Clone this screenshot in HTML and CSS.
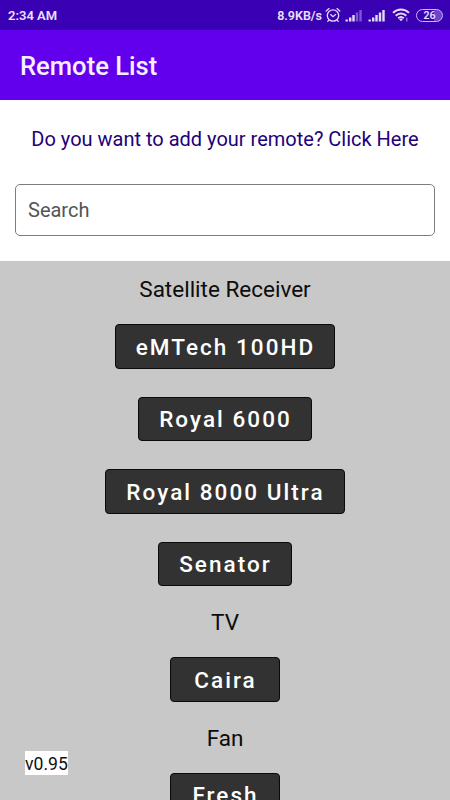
FILE: index.html
```html
<!DOCTYPE html>
<html lang="en">
<head>
  <meta charset="UTF-8">
  <title>Remote List</title>
  <link rel="stylesheet" href="styles.css">
</head>
<body>

  <!-- STATUS BAR -->
  <div class="status-bar">
    <span class="clock">2:34 AM</span>
    <div class="status-icons">
      <span class="speed">8.9KB/s</span>
      <svg class="alarm" width="16" height="16" viewBox="0 0 16 16" fill="none" stroke="#e4d9fb" stroke-width="1.3" stroke-linecap="round">
        <circle cx="8" cy="8.5" r="5.7"/>
        <path d="M1.2 4L4 1.6M14.8 4L12 1.6M5.6 7.6L8 9.7L10.6 7.6M3.8 13.2L2.8 14.4M12.2 13.2L13.2 14.4"/>
      </svg>
      <svg class="signal" width="18" height="13" viewBox="0 0 18 13" fill="#e4d9fb">
        <path d="M0.5 10.5h2.4v2h-2.4zM4 8.5h2.4v4h-2.4zM7.3 6h2.4v6.5h-2.4z"/>
        <path opacity=".4" d="M10.8 3.5h2.4v9h-2.4zM14.3 1h2.4v11.5h-2.4z"/>
      </svg>
      <svg class="signal-full" width="18" height="13" viewBox="0 0 18 13" fill="#e4d9fb">
        <path d="M0.5 10.5h2.4v2h-2.4zM4 8.5h2.4v4h-2.4zM7.3 6h2.4v6.5h-2.4zM10.8 3.5h2.4v9h-2.4zM14.3 1h2.4v11.5h-2.4z"/>
      </svg>
      <svg class="wifi" width="18" height="14" viewBox="0 0 18 14" fill="none" stroke="#e4d9fb" stroke-width="1.9">
        <path d="M1 4.9C5.6 0.4 12.4 0.4 17 4.9M3.7 7.7C6.8 4.7 11.2 4.7 14.3 7.7M6.2 10.2C7.8 8.7 10.2 8.7 11.8 10.2"/>
        <path fill="#e4d9fb" stroke="none" d="M7.1 11.3Q9 9.8 10.9 11.3L9 13.3z"/>
        <path stroke-width="1.2" opacity=".6" d="M14.8 9.8v3.6"/>
      </svg>
      <span class="battery">26</span>
    </div>
  </div>

  <!-- TITLE BAR -->
  <div class="app-bar">
    <h1>Remote List</h1>
  </div>

  <div class="top-section">
    <a class="add-remote" href="#">Do you want to add your remote? Click Here</a>
    <input type="text" class="search" placeholder="Search">
  </div>

  <!-- REMOTES -->
  <div class="remote-list">
    <h2>Satellite Receiver</h2>
    <button>eMTech 100HD</button>
    <button>Royal 6000</button>
    <button>Royal 8000 Ultra</button>
    <button>Senator</button>
    <h2>TV</h2>
    <button>Caira</button>
    <h2>Fan</h2>
    <button>Fresh</button>
  </div>

  <span class="version">v0.95</span>

</body>
</html>
```
FILE: styles.css
```css
* {
  box-sizing: border-box;
}

body {
  display: flex;
  flex-direction: column;
  height: 100vh;
  margin: 0;
  overflow: hidden;
  background-color: #fff;
  font-family: Roboto, sans-serif;
}

.status-bar {
  display: flex;
  justify-content: space-between;
  align-items: center;
  flex: none;
  height: 30px;
  padding: 0 7px 0 8px;
  background-color: #3a00b3;
  color: #e9e0fc;
  font-size: 13px;
  font-weight: 600;
}

.status-icons {
  display: flex;
  align-items: center;
}

.speed {
  font-size: 12.5px;
}

.alarm {
  margin-left: 3px;
}

.signal {
  margin-left: 4px;
}

.signal-full {
  margin-left: 5px;
}

.wifi {
  margin-left: 6px;
}

.battery {
  width: 27px;
  height: 13px;
  margin-left: 6px;
  border: 1.5px solid #cbb8f3;
  border-radius: 7px;
  background: linear-gradient(to right, #3a00b3 68%, #6d45cc 68%);
  font-size: 10.5px;
  line-height: 11px;
  text-align: center;
}

.app-bar {
  display: flex;
  align-items: center;
  flex: none;
  height: 70px;
  padding: 2px 20px 0;
  background-color: #6200ee;
}

.app-bar h1 {
  margin: 0;
  color: #f6effe;
  font-size: 25.6px;
  font-weight: 500;
}

.top-section {
  display: flex;
  flex-direction: column;
  flex: none;
  height: 161px;
  padding: 27px 15px 0;
}

.add-remote {
  height: 25px;
  margin-bottom: 32px;
  color: #22007c;
  font-size: 20px;
  line-height: 25px;
  text-align: center;
  text-decoration: none;
  white-space: nowrap;
}

.search {
  width: 100%;
  height: 52px;
  padding: 0 12px;
  border: 1px solid #7d7d7d;
  border-radius: 5px;
  background: #fff;
  font-family: inherit;
  font-size: 20px;
}

.search::placeholder {
  color: #555;
}

.remote-list {
  display: flex;
  flex-direction: column;
  align-items: center;
  flex: 1;
  min-height: 0;
  padding-top: 6px;
  overflow: hidden;
  background-color: #c8c8c8;
}

.remote-list h2 {
  flex: none;
  height: 43px;
  margin: 0;
  color: #0c0c0c;
  font-size: 22.5px;
  font-weight: 400;
  line-height: 45px;
}

.remote-list button {
  flex: none;
  height: 44.5px;
  min-width: 110px;
  margin: 14px 0;
  padding: 1px 19px 0 20px;
  border: 1px solid #0a0a0a;
  border-radius: 4px;
  background-color: #323232;
  color: #fff;
  font-family: inherit;
  font-size: 22.5px;
  font-weight: 500;
  letter-spacing: 2.05px;
}

/* floats over the list */
.version {
  position: absolute;
  left: 25px;
  bottom: 25px;
  height: 24px;
  background-color: #fff;
  color: #111;
  font-size: 17.6px;
  line-height: 26px;
}
```
